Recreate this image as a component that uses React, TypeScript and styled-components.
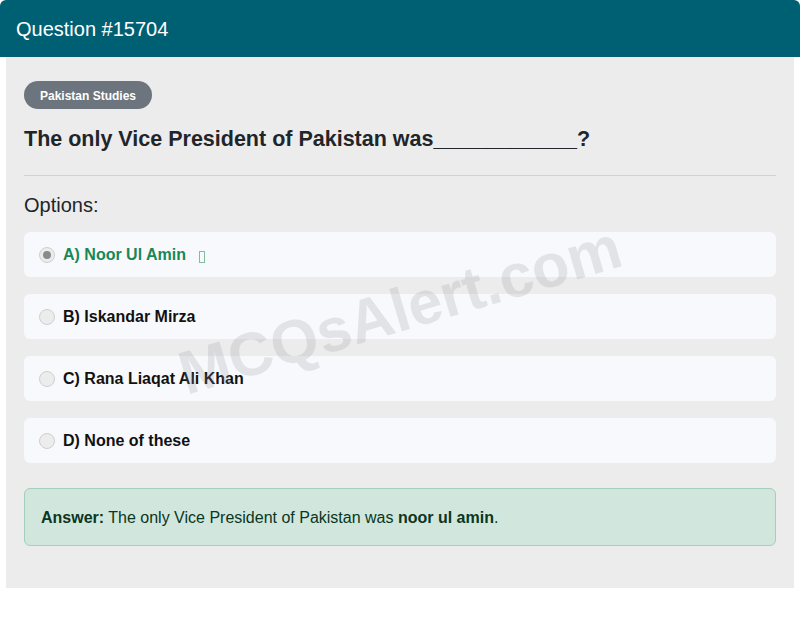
import React from "react";
import styled, { createGlobalStyle } from "styled-components";

const GlobalStyle = createGlobalStyle`
  html, body {
    margin: 0;
    padding: 0;
    background: #ffffff;
    font-family: "Liberation Sans", Arial, sans-serif;
  }
`;

const Card = styled.div`
  position: relative;
  width: 800px;
  border-radius: 6px;
  overflow: hidden;
  background: #ffffff;
  padding-bottom: 5px;
`;

const Header = styled.div`
  height: 57px;
  background: #006073;
  color: #ffffff;
  font-size: 20px;
  display: flex;
  align-items: center;
  padding: 2px 16px 0;
  box-sizing: border-box;
`;

const Body = styled.div`
  position: relative;
  margin: 0 6px;
  background: #ececec;
  padding: 24px 18px 42px;
  overflow: hidden;
`;

const Badge = styled.span`
  display: inline-flex;
  align-items: center;
  height: 28px;
  padding: 1px 16px 0;
  box-sizing: border-box;
  border-radius: 14px;
  background: #6c757d;
  color: #ffffff;
  font-size: 12px;
  font-weight: 700;
`;

const Question = styled.h2`
  margin: 17px 0 0;
  font-size: 21.5px;
  line-height: 27px;
  font-weight: 700;
  color: #212529;
`;

const Divider = styled.hr`
  margin: 22px 0 0;
  border: none;
  border-top: 1px solid #d2d2d2;
`;

const OptionsLabel = styled.div`
  margin-top: 17px;
  font-size: 20px;
  line-height: 24px;
  color: #212529;
`;

const OptionList = styled.div`
  display: flex;
  flex-direction: column;
  gap: 17px;
  margin-top: 15px;
`;

const Option = styled.div<{ $correct?: boolean }>`
  height: 45px;
  display: flex;
  align-items: center;
  padding: 0 15px;
  border-radius: 6px;
  background: #f8f9fc;
  font-size: 16px;
  font-weight: 700;
  color: ${(p) => (p.$correct ? "#198754" : "#111111")};
`;

const Radio = styled.span<{ $checked?: boolean }>`
  width: 14px;
  height: 14px;
  border-radius: 50%;
  border: 1px solid #cfcfcf;
  background: #ececec;
  margin-right: 8px;
  display: flex;
  align-items: center;
  justify-content: center;

  &::after {
    content: "";
    width: 8px;
    height: 8px;
    border-radius: 50%;
    background: ${(p) => (p.$checked ? "#8a8a8a" : "transparent")};
  }
`;

const MissingGlyph = styled.span`
  display: inline-block;
  width: 4px;
  height: 10px;
  border: 1px solid #7fbf9c;
  margin-left: 13px;
  margin-top: 4px;
`;

const Answer = styled.div`
  margin-top: 25px;
  padding: 19px 16px 18px;
  border: 1px solid #a3cfbb;
  border-radius: 6px;
  background: #d1e7dd;
  color: #0a3622;
  font-size: 16px;
  line-height: 19px;

  b {
    font-weight: 700;
  }
`;

const Watermark = styled.div`
  position: absolute;
  left: 50%;
  top: 253px;
  font-size: 61px;
  font-weight: 700;
  color: rgba(150, 150, 160, 0.22);
  transform: translate(-50%, -50%) rotate(-16.5deg);
  pointer-events: none;
  white-space: nowrap;
`;

const options = [
  { label: "A) Noor Ul Amin", correct: true },
  { label: "B) Iskandar Mirza" },
  { label: "C) Rana Liaqat Ali Khan" },
  { label: "D) None of these" },
];

export default function App() {
  return (
    <>
      <GlobalStyle />
      <Card>
        <Header>Question #15704</Header>
        <Body>
          <Badge>Pakistan Studies</Badge>
          <Question>The only Vice President of Pakistan was____________?</Question>
          <Divider />
          <OptionsLabel>Options:</OptionsLabel>
          <OptionList>
            {options.map((o) => (
              <Option key={o.label} $correct={o.correct}>
                <Radio $checked={o.correct} />
                {o.label}
                {o.correct && <MissingGlyph />}
              </Option>
            ))}
          </OptionList>
          <Answer>
            <b>Answer:</b> The only Vice President of Pakistan was <b>noor ul amin</b>.
          </Answer>
          <Watermark>MCQsAlert.com</Watermark>
        </Body>
      </Card>
    </>
  );
}
